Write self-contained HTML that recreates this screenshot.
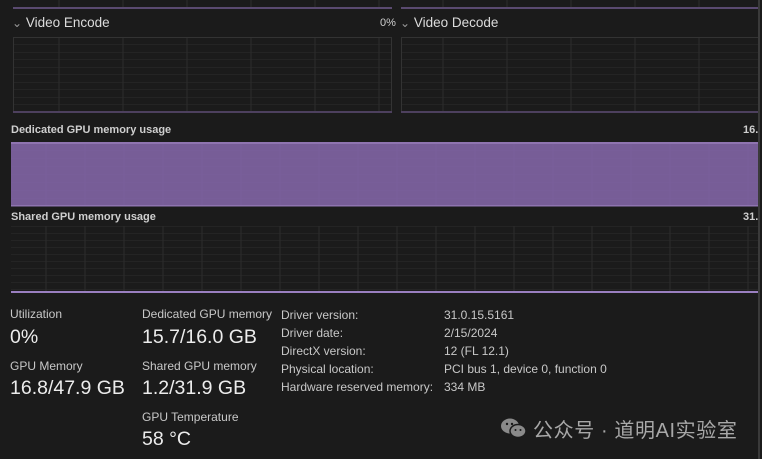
<!DOCTYPE html>
<html><head><meta charset="utf-8"><style>
html,body{margin:0;padding:0;}
body{width:762px;height:459px;background:#1b1b1b;position:relative;overflow:hidden;font-family:"Segoe UI","Liberation Sans","Noto Sans CJK SC",sans-serif;color:#d8d8d8;}
.a{position:absolute;white-space:nowrap;}
.t{font-size:13.5px;color:#dcdcdc;}
.s{font-size:11px;color:#cfcfcf;font-weight:bold;}
.l{font-size:12px;color:#c8c8c8;}
.b{font-size:19.5px;color:#ececec;}
</style></head><body>
<svg class="a" style="left:0;top:0" width="762" height="459">
<defs>
<pattern id="g1" x="13" y="37" width="64" height="7.5" patternUnits="userSpaceOnUse">
<path d="M46 0V7.5M0 0H64" stroke="#2c2c2c" stroke-width="1" fill="none"/></pattern>
<pattern id="g2" x="11" y="226" width="39" height="7" patternUnits="userSpaceOnUse">
<path d="M35 0V7M0 0H39" stroke="#2c2c2c" stroke-width="1" fill="none"/></pattern>
<pattern id="g3" x="11" y="142" width="39" height="8" patternUnits="userSpaceOnUse">
<path d="M35 0V8M0 0H39" stroke="#7e63a0" stroke-width="1" fill="none"/></pattern>
</defs>
<rect x="13" y="0" width="379" height="8" fill="url(#g1)"/>
<rect x="13" y="7" width="379" height="2" fill="#5a4a70"/>
<rect x="401" y="0" width="357" height="8" fill="url(#g1)"/>
<rect x="401" y="7" width="357" height="2" fill="#5a4a70"/>
<rect x="13.5" y="37.5" width="378" height="75" fill="url(#g1)" stroke="#333" />
<rect x="13" y="111" width="379" height="2" fill="#4d405e"/>
<rect x="401.5" y="37.5" width="357" height="75" fill="url(#g1)" stroke="#333"/>
<rect x="401" y="111" width="357" height="2" fill="#4d405e"/>
<rect x="11" y="142" width="747" height="64" fill="#775d97"/>
<rect x="11" y="142" width="747" height="64" fill="url(#g3)" opacity="0.4"/>
<rect x="11" y="142" width="747" height="2" fill="#8f74b0"/>
<rect x="11" y="205" width="747" height="1.5" fill="#8f74b0"/>
<rect x="11" y="226" width="747" height="66" fill="url(#g2)"/>
<rect x="11" y="291" width="747" height="2" fill="#9a7fc0"/>
<rect x="758" y="0" width="2" height="459" fill="#3a3a3a"/>
</svg>
<div class="a t" style="left:12px;top:15px;"><span style="font-size:12px;color:#999">&#8964;</span>&nbsp;Video Encode</div>
<div class="a" style="left:380px;top:17px;font-size:11px;color:#cfcfcf;">0%</div>
<div class="a t" style="left:400px;top:15px;"><span style="font-size:12px;color:#999">&#8964;</span>&nbsp;Video Decode</div>
<div class="a s" style="left:11px;top:124px;">Dedicated GPU memory usage</div>
<div class="a s" style="left:743px;top:124px;">16.</div>
<div class="a s" style="left:11px;top:211px;">Shared GPU memory usage</div>
<div class="a s" style="left:743px;top:211px;">31.</div>

<div class="a l" style="left:10px;top:307px;">Utilization</div>
<div class="a b" style="left:10px;top:326px;">0%</div>
<div class="a l" style="left:10px;top:359px;">GPU Memory</div>
<div class="a b" style="left:10px;top:377px;">16.8/47.9 GB</div>
<div class="a l" style="left:142px;top:307px;">Dedicated GPU memory</div>
<div class="a b" style="left:142px;top:326px;">15.7/16.0 GB</div>
<div class="a l" style="left:142px;top:359px;">Shared GPU memory</div>
<div class="a b" style="left:142px;top:377px;">1.2/31.9 GB</div>
<div class="a l" style="left:142px;top:410px;">GPU Temperature</div>
<div class="a b" style="left:142px;top:428px;">58 °C</div>

<div class="a l" style="left:281px;top:306px;line-height:18px;">Driver version:<br>Driver date:<br>DirectX version:<br>Physical location:<br>Hardware reserved memory:</div>
<div class="a l" style="left:444px;top:306px;line-height:18px;">31.0.15.5161<br>2/15/2024<br>12 (FL 12.1)<br>PCI bus 1, device 0, function 0<br>334 MB</div>

<svg class="a" style="left:500px;top:416px" width="28" height="24">
<ellipse cx="10" cy="10" rx="9" ry="7.5" fill="#8a8a8a"/>
<ellipse cx="18" cy="15" rx="8" ry="6.5" fill="#8a8a8a" stroke="#1b1b1b" stroke-width="1.5"/>
<circle cx="7" cy="8" r="1.2" fill="#1b1b1b"/><circle cx="12" cy="8" r="1.2" fill="#1b1b1b"/>
<circle cx="15.5" cy="14" r="1" fill="#1b1b1b"/><circle cx="20.5" cy="14" r="1" fill="#1b1b1b"/>
</svg>
<div class="a" style="left:533px;top:414px;font-size:20px;letter-spacing:0.6px;color:#a8a8a8;">公众号 · 道明AI实验室</div>
</body></html>
